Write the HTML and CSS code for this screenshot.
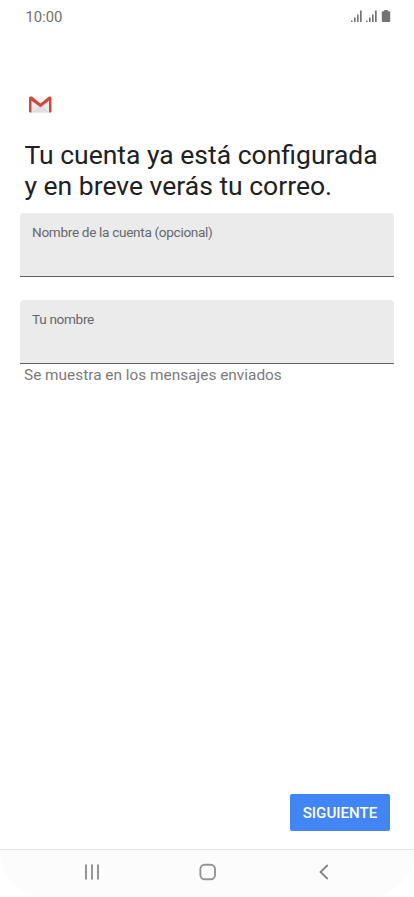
FILE: index.html
```html
<!DOCTYPE html>
<html lang="es">
<head>
<meta charset="utf-8">
<meta name="viewport" content="width=device-width, initial-scale=1">
<title>Configuración de la cuenta</title>
<link rel="stylesheet" href="styles.css">
</head>
<body>
<div class="screen">
  <header class="status">
    <span class="time">10:00</span>
    <svg class="indicators" width="40" height="14" viewBox="0 0 40 14" fill="#747474" aria-hidden="true">
      <path d="M0 10.500h1.600v1.500H0zM3 7.500h1.600V12H3zM6 4.500h1.600V12H6zM9 .5h1.700V12H9z"/>
      <path d="M15 10.500h1.600v1.500H15zM18 7.500h1.600V12H18zM21 4.500h1.600V12H21zM24 .5h1.700V12H24z"/>
      <path d="M33.200 0h3.600v1.200h1.400q1 0 1 1v8.800q0 1-1 1h-6.400q-1 0-1-1V2.200q0-1 1-1h1.400z"/>
    </svg>
  </header>
  <main class="content">
    <svg class="logo" width="23" height="18" viewBox="0 0 23 18" aria-hidden="true">
      <path d="M1 1h21v14.500q0 1-1 1H2q-1 0-1-1z" fill="#ebebeb"/>
      <path d="M2.500 16.500 11.500 8l9 8.500z" fill="#dedede"/>
      <path d="M2.500 1h18l-9 7z" fill="#f5f5f5"/>
      <path d="M0 1.700Q0 .5 1.500 .5h1.500l8.500 7 8.500-7h1q1.500 0 1.500 1.200v13.800q0 1-1 1h-1.500V4.700L11.500 11.200 2.500 4.700v11.800H1q-1 0-1-1z" fill="#d3483e"/>
    </svg>
    <h1 class="title"><span class="line">Tu cuenta ya está configurada</span> <span class="line">y en breve verás tu correo.</span></h1>
    <div class="field"><span class="label">Nombre de la cuenta (opcional)</span></div>
    <div class="field"><span class="label">Tu nombre</span></div>
    <p class="hint">Se muestra en los mensajes enviados</p>
  </main>
  <button class="next" type="button">SIGUIENTE</button>
  <nav class="navbar">
    <svg width="18" height="18" viewBox="0 0 18 18" fill="#949494"><path d="M2 1.500h2v15H2zM8 1.500h2v15H8zM14 1.500h2v15h-2z"/></svg>
    <svg width="18" height="18" viewBox="0 0 18 18" fill="none" stroke="#949494" stroke-width="1.900"><rect x="1.400" y="1.700" width="14.600" height="14.600" rx="4.300"/></svg>
    <svg width="18" height="18" viewBox="0 0 18 18" fill="none" stroke="#858585" stroke-width="1.800"><path d="M12.700 2 5.500 9l7.200 7"/></svg>
  </nav>
</div>
</body>
</html>
```
FILE: styles.css
```css
* {
  box-sizing: border-box;
}

body {
  margin: 0;
  background: #fff;
  font-family: Roboto, sans-serif;
}

.screen {
  display: flex;
  flex-direction: column;
  width: 414px;
  height: 897px;
  overflow: hidden;
}

.status {
  display: flex;
  justify-content: space-between;
  height: 34px;
  padding: 10px 23px 0 25.5px;
}

.time {
  margin-top: -1px;
  font-size: 14.8px;
  line-height: 16px;
  color: #707070;
}

.content {
  display: flex;
  flex: 1;
  flex-direction: column;
  padding: 62px 20px 0;
}

.logo {
  margin-left: 9px;
}

.title {
  margin: 25px 0 12px 4.4px;
  font-size: 26.5px;
  font-weight: 400;
  line-height: 31px;
  color: #202124;
  white-space: nowrap;
}

.line {
  display: block;
}

.field {
  height: 64px;
  margin-bottom: 23px;
  padding: 11px 12px;
  border-bottom: 1px solid #606166;
  border-radius: 4px 4px 0 0;
  background: #ebebeb;
}

.label {
  display: block;
  font-size: 13.6px;
  line-height: 17px;
  letter-spacing: -0.32px;
  color: #66686b;
}

.hint {
  margin: -22px 0 0 4px;
  font-size: 15.4px;
  line-height: 20px;
  color: #7b7b7b;
}

.next {
  align-self: flex-end;
  width: 100px;
  height: 37px;
  margin: 0 24px 18px 0;
  padding: 0;
  border: 0;
  border-radius: 2px;
  background: #4285f4;
  color: #fff;
  font: 500 15.1px/20px Roboto, sans-serif;
}

.navbar {
  display: flex;
  justify-content: space-between;
  height: 48px;
  padding: 13px 81px 0 83px;
  border-top: 1px solid #e2e2e2;
  border-radius: 0 0 46px 46px;
  background: #fcfcfc;
}
```
